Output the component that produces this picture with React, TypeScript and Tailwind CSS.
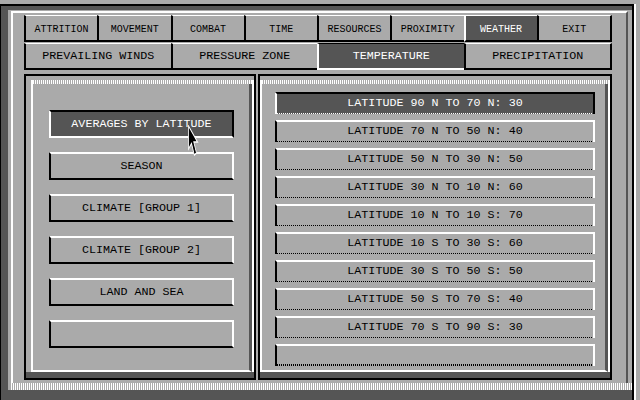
import React from 'react';

const dither = 'bg-[repeating-linear-gradient(90deg,#fff_0px,#fff_1px,#aaa_1px,#aaa_2px)]';
const ditherBlack = 'bg-[repeating-linear-gradient(90deg,#000_0px,#000_1px,#aaa_1px,#aaa_2px)]';
const ditherLight = 'bg-[repeating-linear-gradient(90deg,#fff_0px,#fff_1px,#555_1px,#555_2px)]';

const topTabs = ['ATTRITION', 'MOVEMENT', 'COMBAT', 'TIME', 'RESOURCES', 'PROXIMITY', 'WEATHER', 'EXIT'];
const subTabs = ['PREVAILING WINDS', 'PRESSURE ZONE', 'TEMPERATURE', 'PRECIPITATION'];
const leftButtons = ['AVERAGES BY LATITUDE', 'SEASON', 'CLIMATE [GROUP 1]', 'CLIMATE [GROUP 2]', 'LAND AND SEA', ''];
const rows = [
  'LATITUDE 90 N TO 70 N: 30',
  'LATITUDE 70 N TO 50 N: 40',
  'LATITUDE 50 N TO 30 N: 50',
  'LATITUDE 30 N TO 10 N: 60',
  'LATITUDE 10 N TO 10 S: 70',
  'LATITUDE 10 S TO 30 S: 60',
  'LATITUDE 30 S TO 50 S: 50',
  'LATITUDE 50 S TO 70 S: 40',
  'LATITUDE 70 S TO 90 S: 30',
  '',
];

const Tab = ({ label, active, last, small }: { label: string; active: boolean; last: boolean; small: boolean }) => (
  <div
    className={`flex-1 h-[27px] flex items-center justify-center pt-[2px] border-t border-b-2 border-l-2 whitespace-pre ${
      small ? 'text-[10px]' : 'text-[11.7px]'
    } ${
      active
        ? small
          ? 'bg-[#555] text-white border-l-white border-t-white border-b-black'
          : 'bg-[#555] text-white border-l-white border-t-black border-b-white'
        : 'bg-[#aaa] text-black border-l-black border-t-white border-b-black'
    } ${last ? 'border-r-2 border-r-black' : ''}`}
  >
    {label}
  </div>
);

const Panel = ({ className, inset, children }: { className: string; inset: string; children: React.ReactNode }) => (
  <div className={`border-2 border-black bg-[#aaa] flex flex-col pt-[4px] ${className}`}>
    <div className={`flex-1 flex flex-col border-l-2 border-r-2 border-white ${inset}`}>
      <div className={`h-[4px] ${dither}`} />
      <div className="flex-1 flex flex-col border-r-[3px] border-r-[#555] border-b-2 border-b-white">{children}</div>
    </div>
    <div className="h-[6px] bg-[#555]" />
  </div>
);

const App = () => {
  return (
    <div className="relative w-[640px] h-[400px] bg-[#aaa] pt-[4px] pr-[4px] flex font-['Liberation_Mono',monospace] overflow-hidden">
      <div className="flex-1 flex border-r-2 border-white">
        <div className="flex-1 flex flex-col border-t-2 border-l border-r-2 border-black bg-[#555] pl-[7px] pt-[4px] pb-[10px]">
          <div className="flex-1 flex flex-col bg-[#aaa] pl-[3px] pt-[1px]">
            <div className="flex-1 flex flex-col border-t-2 border-l-2 border-white border-r-2 border-r-[#555] pl-[11px] pt-[2px] mr-[4px]">
              {/* Main tabs */}
              <div className="flex w-[588px]">
                {topTabs.map((t, i) => (
                  <Tab key={t} label={t} active={t === 'WEATHER'} last={i === topTabs.length - 1} small />
                ))}
              </div>
              <div className="flex w-[588px] mt-[1px]">
                {subTabs.map((t, i) => (
                  <Tab key={t} label={t} active={t === 'TEMPERATURE'} last={i === subTabs.length - 1} small={false} />
                ))}
              </div>

              {/* Panels */}
              <div className="flex w-[588px] h-[306px] mt-[4px] gap-[2px]">
                <Panel className="w-[232px]" inset="ml-[5px]">
                  <div className="flex flex-col gap-[14px] pt-[26px] pl-[16px]">
                    {leftButtons.map((b, i) => (
                      <div
                        key={i}
                        className={`w-[185px] h-[28px] border-2 flex items-center justify-center pt-[2px] text-[11.7px] whitespace-pre ${
                          i === 0
                            ? 'bg-[#555] text-white border-t-black border-r-black border-l-white border-b-white'
                            : 'bg-[#aaa] text-black border-t-white border-r-white border-l-black border-b-black'
                        }`}
                      >
                        {b}
                      </div>
                    ))}
                  </div>
                </Panel>

                <Panel className="flex-1" inset="">
                  <div className="flex flex-col gap-[6px] pt-[8px] pl-[13px]">
                    {rows.map((r, i) => (
                      <div
                        key={i}
                        className={`w-[320px] h-[22px] flex flex-col border-t-2 border-l-2 border-r-2 ${
                          i === 0 ? 'bg-[#555] text-white border-t-black border-r-black border-l-white' : 'bg-[#aaa] text-black border-t-white border-r-white border-l-black'
                        }`}
                      >
                        <div className="flex-1 flex items-center justify-center pt-[1px] text-[11.7px] whitespace-pre">{r}</div>
                        <div className={`h-[2px] ${i === 0 ? ditherLight : ditherBlack}`} />
                      </div>
                    ))}
                  </div>
                </Panel>
              </div>
            </div>
            <div className={`h-[7px] ${dither}`} />
          </div>
        </div>
      </div>

      {/* Mouse pointer */}
      <svg className="absolute left-[188px] top-[125px]" width="12" height="31" viewBox="0 0 12 15.5" preserveAspectRatio="none">
        <path d="M0.5 0.5 L0.5 12 L3.5 9.2 L6.3 15 L8.5 14 L5.8 8.5 L9.5 8.5 Z" fill="#000" stroke="#fff" strokeWidth="0.8" />
      </svg>
    </div>
  );
};

export default App;
